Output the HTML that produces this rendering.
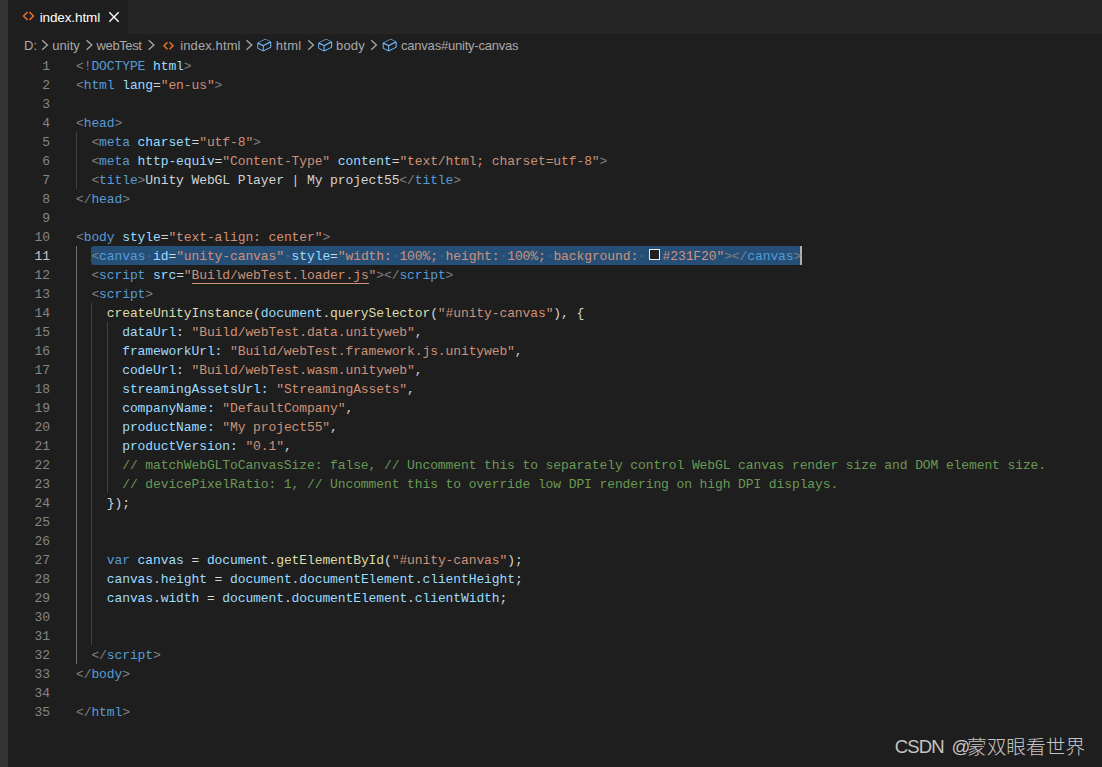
<!DOCTYPE html>
<html lang="zh">
<head>
<meta charset="utf-8">
<title>index.html</title>
<style>
*{box-sizing:border-box;margin:0;padding:0}
html,body{width:1102px;height:767px;overflow:hidden;background:#1e1e1e}
body{position:relative;font-family:"Liberation Sans","Noto Sans CJK SC",sans-serif}
.strip{position:absolute;left:0;top:0;width:8px;height:767px;background:#333333}
.tabbar{position:absolute;left:8px;top:0;width:1094px;height:34px;background:#252526}
.tab{position:absolute;left:0;top:0;width:120px;height:34px;background:#1e1e1e}
.tabname{position:absolute;left:39.7px;top:9px;font-size:13.5px;line-height:17px;color:#ffffff;white-space:nowrap;letter-spacing:-0.12px}
.bct{position:absolute;top:37px;font-size:13px;line-height:17px;color:#a9a9a9;white-space:nowrap}
.ov{position:absolute;left:0;top:0}
.ln{position:absolute;left:0;height:19px;width:1102px;line-height:19px;white-space:pre;font-family:"Liberation Mono",monospace;font-size:13px;letter-spacing:-0.103px}
.no{position:absolute;left:8px;width:42px;text-align:right;color:#858585;margin-top:1px}
.no.act{color:#c6c6c6}
.code{position:absolute;left:76px;top:0;height:19px;margin-top:1px}
.g{color:#808080}.t{color:#569cd6}.a{color:#9cdcfe}.s{color:#ce9178}.w{color:#d4d4d4}.c{color:#6a9955}.f{color:#dcdcaa}.k{color:#569cd6}
.su{color:#ce9178}
.ul{position:absolute;left:191.5px;top:283px;width:177px;height:1px;background:#ce9178}
.selbg{position:absolute;left:91.4px;top:246px;width:709.4px;height:19px;background:#264f78;border-radius:3px}
.d{color:rgba(227,228,226,0.22)}
.sw{display:inline-block;width:11.2px;height:10.5px;margin:0 2.8px 0 2.8px;border:1.4px solid #eeeeee;background:#231F20;vertical-align:top;position:relative;top:2.4px}
.cur{position:absolute;left:800px;top:246px;width:2px;height:19px;background:#aeafad}
.gd{position:absolute;width:1px;background:#404040}
.wm{position:absolute;top:735px;line-height:24px;color:#c4c4c4;white-space:nowrap}
</style>
</head>
<body>
<div class="strip"></div>
<div class="tabbar"><div class="tab"></div></div>
<span class="tabname">index.html</span>
<span class="bct" style="left:24px">D:</span>
<span class="bct" style="left:52.3px">unity</span>
<span class="bct" style="left:96.6px;letter-spacing:-0.4px">webTest</span>
<span class="bct" style="left:180.3px;letter-spacing:0.1px">index.html</span>
<span class="bct" style="left:275.7px;letter-spacing:0.3px">html</span>
<span class="bct" style="left:336px;letter-spacing:0.15px">body</span>
<span class="bct" style="left:401px;letter-spacing:-0.21px">canvas#unity-canvas</span>
<svg class="ov" width="1102" height="56" viewBox="0 0 1102 56">
  <path d="M27.6 12 L23.6 16 L27.6 20 M29.4 12 L33.4 16 L29.4 20" fill="none" stroke="#e06c2a" stroke-width="1.7"/>
  <path d="M109.3 12.3 L118.7 21.7 M118.7 12.3 L109.3 21.7" fill="none" stroke="#ffffff" stroke-width="1.35"/>
  <path d="M167.5 42.2 L164 45.7 L167.5 49.2 M169.5 42.2 L173 45.7 L169.5 49.2" fill="none" stroke="#e06c2a" stroke-width="1.6"/>
  <path d="M42.2 40.3 L47.4 45 L42.2 49.7" fill="none" stroke="#a9a9a9" stroke-width="1.3"/><path d="M86.6 40.3 L91.8 45 L86.6 49.7" fill="none" stroke="#a9a9a9" stroke-width="1.3"/><path d="M148.7 40.3 L153.9 45 L148.7 49.7" fill="none" stroke="#a9a9a9" stroke-width="1.3"/><path d="M246.5 40.3 L251.7 45 L246.5 49.7" fill="none" stroke="#a9a9a9" stroke-width="1.3"/><path d="M308.2 40.3 L313.4 45 L308.2 49.7" fill="none" stroke="#a9a9a9" stroke-width="1.3"/><path d="M371.2 40.3 L376.4 45 L371.2 49.7" fill="none" stroke="#a9a9a9" stroke-width="1.3"/>
  <g transform="translate(256.3,37)"><path d="M14.45 4.5l-5-2.5h-.9l-7 3.5-.55.89v4.5l.55.9 5 2.5h.9l7-3.5.55-.9v-4.5l-.55-.89zm-8 8.64l-4.5-2.25v-4l4.5 2v4.25zm.5-5.14L2.29 5.72l6.66-3.33L13.61 4.6 6.95 8zm7 1.89l-6.5 3.25V8.89l6.5-3.25v4.25z" fill="#75beff"/></g>
  <g transform="translate(317.2,37)"><path d="M14.45 4.5l-5-2.5h-.9l-7 3.5-.55.89v4.5l.55.9 5 2.5h.9l7-3.5.55-.9v-4.5l-.55-.89zm-8 8.64l-4.5-2.25v-4l4.5 2v4.25zm.5-5.14L2.29 5.72l6.66-3.33L13.61 4.6 6.95 8zm7 1.89l-6.5 3.25V8.89l6.5-3.25v4.25z" fill="#75beff"/></g>
  <g transform="translate(381.7,37)"><path d="M14.45 4.5l-5-2.5h-.9l-7 3.5-.55.89v4.5l.55.9 5 2.5h.9l7-3.5.55-.9v-4.5l-.55-.89zm-8 8.64l-4.5-2.25v-4l4.5 2v4.25zm.5-5.14L2.29 5.72l6.66-3.33L13.61 4.6 6.95 8zm7 1.89l-6.5 3.25V8.89l6.5-3.25v4.25z" fill="#75beff"/></g>
</svg>
<div class="ul"></div>
<div class="gd" style="left:76px;top:132px;height:57px"></div>
<div class="gd" style="left:76px;top:246px;height:418px;background:#707070"></div>
<div class="gd" style="left:91px;top:303px;height:342px"></div>
<div class="gd" style="left:107px;top:322px;height:171px"></div>
<div class="ln" style="top:56px"><span class="no">1</span><span class="code"><span class="g">&lt;!</span><span class="t">DOCTYPE</span><span class="w"> </span><span class="a">html</span><span class="g">&gt;</span></span></div>
<div class="ln" style="top:75px"><span class="no">2</span><span class="code"><span class="g">&lt;</span><span class="t">html</span><span class="w"> </span><span class="a">lang</span><span class="w">=</span><span class="s">"en-us"</span><span class="g">&gt;</span></span></div>
<div class="ln" style="top:94px"><span class="no">3</span><span class="code"></span></div>
<div class="ln" style="top:113px"><span class="no">4</span><span class="code"><span class="g">&lt;</span><span class="t">head</span><span class="g">&gt;</span></span></div>
<div class="ln" style="top:132px"><span class="no">5</span><span class="code"><span class="w">  </span><span class="g">&lt;</span><span class="t">meta</span><span class="w"> </span><span class="a">charset</span><span class="w">=</span><span class="s">"utf-8"</span><span class="g">&gt;</span></span></div>
<div class="ln" style="top:151px"><span class="no">6</span><span class="code"><span class="w">  </span><span class="g">&lt;</span><span class="t">meta</span><span class="w"> </span><span class="a">http-equiv</span><span class="w">=</span><span class="s">"Content-Type"</span><span class="w"> </span><span class="a">content</span><span class="w">=</span><span class="s">"text/html; charset=utf-8"</span><span class="g">&gt;</span></span></div>
<div class="ln" style="top:170px"><span class="no">7</span><span class="code"><span class="w">  </span><span class="g">&lt;</span><span class="t">title</span><span class="g">&gt;</span><span class="w">Unity WebGL Player | My project55</span><span class="g">&lt;/</span><span class="t">title</span><span class="g">&gt;</span></span></div>
<div class="ln" style="top:189px"><span class="no">8</span><span class="code"><span class="g">&lt;/</span><span class="t">head</span><span class="g">&gt;</span></span></div>
<div class="ln" style="top:208px"><span class="no">9</span><span class="code"></span></div>
<div class="ln" style="top:227px"><span class="no">10</span><span class="code"><span class="g">&lt;</span><span class="t">body</span><span class="w"> </span><span class="a">style</span><span class="w">=</span><span class="s">"text-align: center"</span><span class="g">&gt;</span></span></div>
<div class="selbg"></div><div class="cur"></div><div class="ln cur-ln" style="top:246px"><span class="no act">11</span><span class="code">  <span class="g">&lt;</span><span class="t">canvas</span><span class="d">·</span><span class="a">id</span><span class="w">=</span><span class="s">"unity-canvas"</span><span class="d">·</span><span class="a">style</span><span class="w">=</span><span class="s">"width:</span><span class="d">·</span><span class="s">100%;</span><span class="d">·</span><span class="s">height:</span><span class="d">·</span><span class="s">100%;</span><span class="d">·</span><span class="s">background:</span><span class="d">·</span><span class="sw"></span><span class="s">#231F20"</span><span class="g">&gt;&lt;/</span><span class="t">canvas</span><span class="g">&gt;</span></span></div>
<div class="ln" style="top:265px"><span class="no">12</span><span class="code"><span class="w">  </span><span class="g">&lt;</span><span class="t">script</span><span class="w"> </span><span class="a">src</span><span class="w">=</span><span class="s">"</span><span class="su">Build/webTest.loader.js</span><span class="s">"</span><span class="g">&gt;&lt;/</span><span class="t">script</span><span class="g">&gt;</span></span></div>
<div class="ln" style="top:284px"><span class="no">13</span><span class="code"><span class="w">  </span><span class="g">&lt;</span><span class="t">script</span><span class="g">&gt;</span></span></div>
<div class="ln" style="top:303px"><span class="no">14</span><span class="code"><span class="w">    </span><span class="f">createUnityInstance</span><span class="w">(</span><span class="a">document</span><span class="w">.</span><span class="f">querySelector</span><span class="w">(</span><span class="s">"#unity-canvas"</span><span class="w">), {</span></span></div>
<div class="ln" style="top:322px"><span class="no">15</span><span class="code"><span class="w">      </span><span class="a">dataUrl:</span><span class="w"> </span><span class="s">"Build/webTest.data.unityweb"</span><span class="w">,</span></span></div>
<div class="ln" style="top:341px"><span class="no">16</span><span class="code"><span class="w">      </span><span class="a">frameworkUrl:</span><span class="w"> </span><span class="s">"Build/webTest.framework.js.unityweb"</span><span class="w">,</span></span></div>
<div class="ln" style="top:360px"><span class="no">17</span><span class="code"><span class="w">      </span><span class="a">codeUrl:</span><span class="w"> </span><span class="s">"Build/webTest.wasm.unityweb"</span><span class="w">,</span></span></div>
<div class="ln" style="top:379px"><span class="no">18</span><span class="code"><span class="w">      </span><span class="a">streamingAssetsUrl:</span><span class="w"> </span><span class="s">"StreamingAssets"</span><span class="w">,</span></span></div>
<div class="ln" style="top:398px"><span class="no">19</span><span class="code"><span class="w">      </span><span class="a">companyName:</span><span class="w"> </span><span class="s">"DefaultCompany"</span><span class="w">,</span></span></div>
<div class="ln" style="top:417px"><span class="no">20</span><span class="code"><span class="w">      </span><span class="a">productName:</span><span class="w"> </span><span class="s">"My project55"</span><span class="w">,</span></span></div>
<div class="ln" style="top:436px"><span class="no">21</span><span class="code"><span class="w">      </span><span class="a">productVersion:</span><span class="w"> </span><span class="s">"0.1"</span><span class="w">,</span></span></div>
<div class="ln" style="top:455px"><span class="no">22</span><span class="code"><span class="w">      </span><span class="c">// matchWebGLToCanvasSize: false, // Uncomment this to separately control WebGL canvas render size and DOM element size.</span></span></div>
<div class="ln" style="top:474px"><span class="no">23</span><span class="code"><span class="w">      </span><span class="c">// devicePixelRatio: 1, // Uncomment this to override low DPI rendering on high DPI displays.</span></span></div>
<div class="ln" style="top:493px"><span class="no">24</span><span class="code"><span class="w">    });</span></span></div>
<div class="ln" style="top:512px"><span class="no">25</span><span class="code"></span></div>
<div class="ln" style="top:531px"><span class="no">26</span><span class="code"></span></div>
<div class="ln" style="top:550px"><span class="no">27</span><span class="code"><span class="w">    </span><span class="k">var</span><span class="w"> </span><span class="a">canvas</span><span class="w"> = </span><span class="a">document</span><span class="w">.</span><span class="f">getElementById</span><span class="w">(</span><span class="s">"#unity-canvas"</span><span class="w">);</span></span></div>
<div class="ln" style="top:569px"><span class="no">28</span><span class="code"><span class="w">    </span><span class="a">canvas</span><span class="w">.</span><span class="a">height</span><span class="w"> = </span><span class="a">document</span><span class="w">.</span><span class="a">documentElement</span><span class="w">.</span><span class="a">clientHeight</span><span class="w">;</span></span></div>
<div class="ln" style="top:588px"><span class="no">29</span><span class="code"><span class="w">    </span><span class="a">canvas</span><span class="w">.</span><span class="a">width</span><span class="w"> = </span><span class="a">document</span><span class="w">.</span><span class="a">documentElement</span><span class="w">.</span><span class="a">clientWidth</span><span class="w">;</span></span></div>
<div class="ln" style="top:607px"><span class="no">30</span><span class="code"></span></div>
<div class="ln" style="top:626px"><span class="no">31</span><span class="code"></span></div>
<div class="ln" style="top:645px"><span class="no">32</span><span class="code"><span class="w">  </span><span class="g">&lt;/</span><span class="t">script</span><span class="g">&gt;</span></span></div>
<div class="ln" style="top:664px"><span class="no">33</span><span class="code"><span class="g">&lt;/</span><span class="t">body</span><span class="g">&gt;</span></span></div>
<div class="ln" style="top:683px"><span class="no">34</span><span class="code"></span></div>
<div class="ln" style="top:702px"><span class="no">35</span><span class="code"><span class="g">&lt;/</span><span class="t">html</span><span class="g">&gt;</span></span></div>
<span class="wm" style="left:894.7px;font-size:18.5px;letter-spacing:-0.8px;word-spacing:3.2px">CSDN @</span><span class="wm" style="left:967px;font-size:19.7px;font-weight:300">蒙双眼看世界</span>
</body>
</html>
